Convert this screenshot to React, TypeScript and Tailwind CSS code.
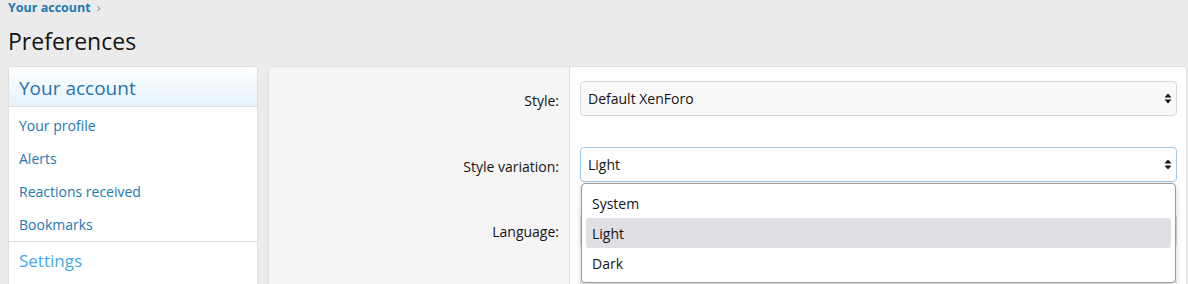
import React from "react";

const font = { fontFamily: '"Open Sans", "Noto Sans", sans-serif' };

const navLinks = ["Your profile", "Alerts", "Reactions received", "Bookmarks"];

const SelectArrows = () => (
  <svg width="8" height="11" viewBox="0 0 8 11" className="shrink-0">
    <path d="M4 0.5 L7.5 4.5 L0.5 4.5 Z" fill="#141414" />
    <path d="M0.5 6.5 L7.5 6.5 L4 10.5 Z" fill="#141414" />
  </svg>
);

type SelectProps = { value: string; focused?: boolean };

const FakeSelect = ({ value, focused }: SelectProps) => (
  <div
    className={
      focused
        ? "flex h-[35px] items-center justify-between rounded-[4px] border border-[#9cc9ec] bg-white pl-[7px] pr-[4px] text-[14px] text-[#141414]"
        : "flex h-[35px] items-center justify-between rounded-[4px] border border-[#d8d8d8] bg-[#f9f9f9] pl-[7px] pr-[4px] text-[14px] text-[#141414]"
    }
  >
    <span>{value}</span>
    <SelectArrows />
  </div>
);

const options = [
  { label: "System", active: false },
  { label: "Light", active: true },
  { label: "Dark", active: false },
];

export default function App() {
  return (
    <div className="min-h-screen bg-[#ebebeb] pl-2 pr-px" style={font}>
      {/* Breadcrumb */}
      <div className="flex h-[17px] items-center gap-[6px] text-[12.5px]">
        <a className="font-bold text-[#2577b1]">Your account</a>
        <span className="text-[#8c8c8c]">›</span>
      </div>

      <h1 className="h-[49px] pt-[6px] text-[23px] leading-[36px] text-[#141414]">Preferences</h1>

      <div className="flex items-start gap-[10px]">
        {/* Sidebar */}
        <div className="w-[250px] shrink-0 overflow-hidden rounded-[3px] border border-[#dfdfdf] bg-white">
          <div className="flex h-[40px] items-center border-b border-[#dfdfdf] bg-linear-to-b from-[#fefefe] to-[#e6f2fb] px-[10px] pt-[4px] text-[19px] text-[#2577b1]">
            Your account
          </div>
          <div className="pt-[2px]">
            {navLinks.map((l) => (
              <div key={l} className="flex h-[33px] items-center px-[10px] text-[14px] text-[#2577b1]">
                {l}
              </div>
            ))}
          </div>
          <div className="border-t border-[#dfdfdf]">
            <div className="flex h-[38px] items-center px-[10px] text-[17px] text-[#47a7eb]">Settings</div>
            <div className="flex h-[33px] items-center px-[10px] text-[14px] text-[#2577b1]">Account details</div>
            <div className="flex h-[33px] items-center px-[10px] text-[14px] text-[#2577b1]">Password and security</div>
          </div>
        </div>

        {/* Main panel */}
        <div className="flex-1 rounded-[3px] border border-[#dfdfdf] bg-white">
          <div className="flex">
            <div className="w-[301px] shrink-0 border-r border-[#dfdfdf] bg-[#f5f5f5] text-right text-[14px] text-[#141414]">
              <div className="h-[66px] pr-[10px] pt-[23px]">Style:</div>
              <div className="h-[66px] pr-[10px] pt-[23px]">Style variation:</div>
              <div className="h-[66px] pr-[10px] pt-[22px]">Language:</div>
              <div className="h-[66px] pr-[10px] pt-[22px]">Time zone:</div>
            </div>
            <div className="flex-1 pl-[10px] pr-[9px]">
              <div className="h-[66px] pt-[14px]">
                <FakeSelect value="Default XenForo" />
              </div>
              <div className="relative h-[66px] pt-[14px]">
                <FakeSelect value="Light" focused />
                <div className="absolute left-px right-px top-[50px] z-10 rounded-[4px] border border-[#9a9a9a] bg-white p-[4px] shadow-[0_2px_6px_rgba(0,0,0,0.18)]">
                  {options.map((o) => (
                    <div
                      key={o.label}
                      className={
                        o.active
                          ? "flex h-[30px] items-center rounded-[3px] bg-[#e0dfe4] px-[6px] text-[14px] text-[#141414]"
                          : "flex h-[30px] items-center rounded-[3px] px-[6px] text-[14px] text-[#141414]"
                      }
                    >
                      {o.label}
                    </div>
                  ))}
                </div>
              </div>
              <div className="h-[66px] pt-[14px]">
                <FakeSelect value="English (US)" />
              </div>
              <div className="h-[66px] pt-[14px]">
                <FakeSelect value="(UTC-05:00) Eastern Time" />
              </div>
            </div>
          </div>
        </div>
      </div>
    </div>
  );
}
